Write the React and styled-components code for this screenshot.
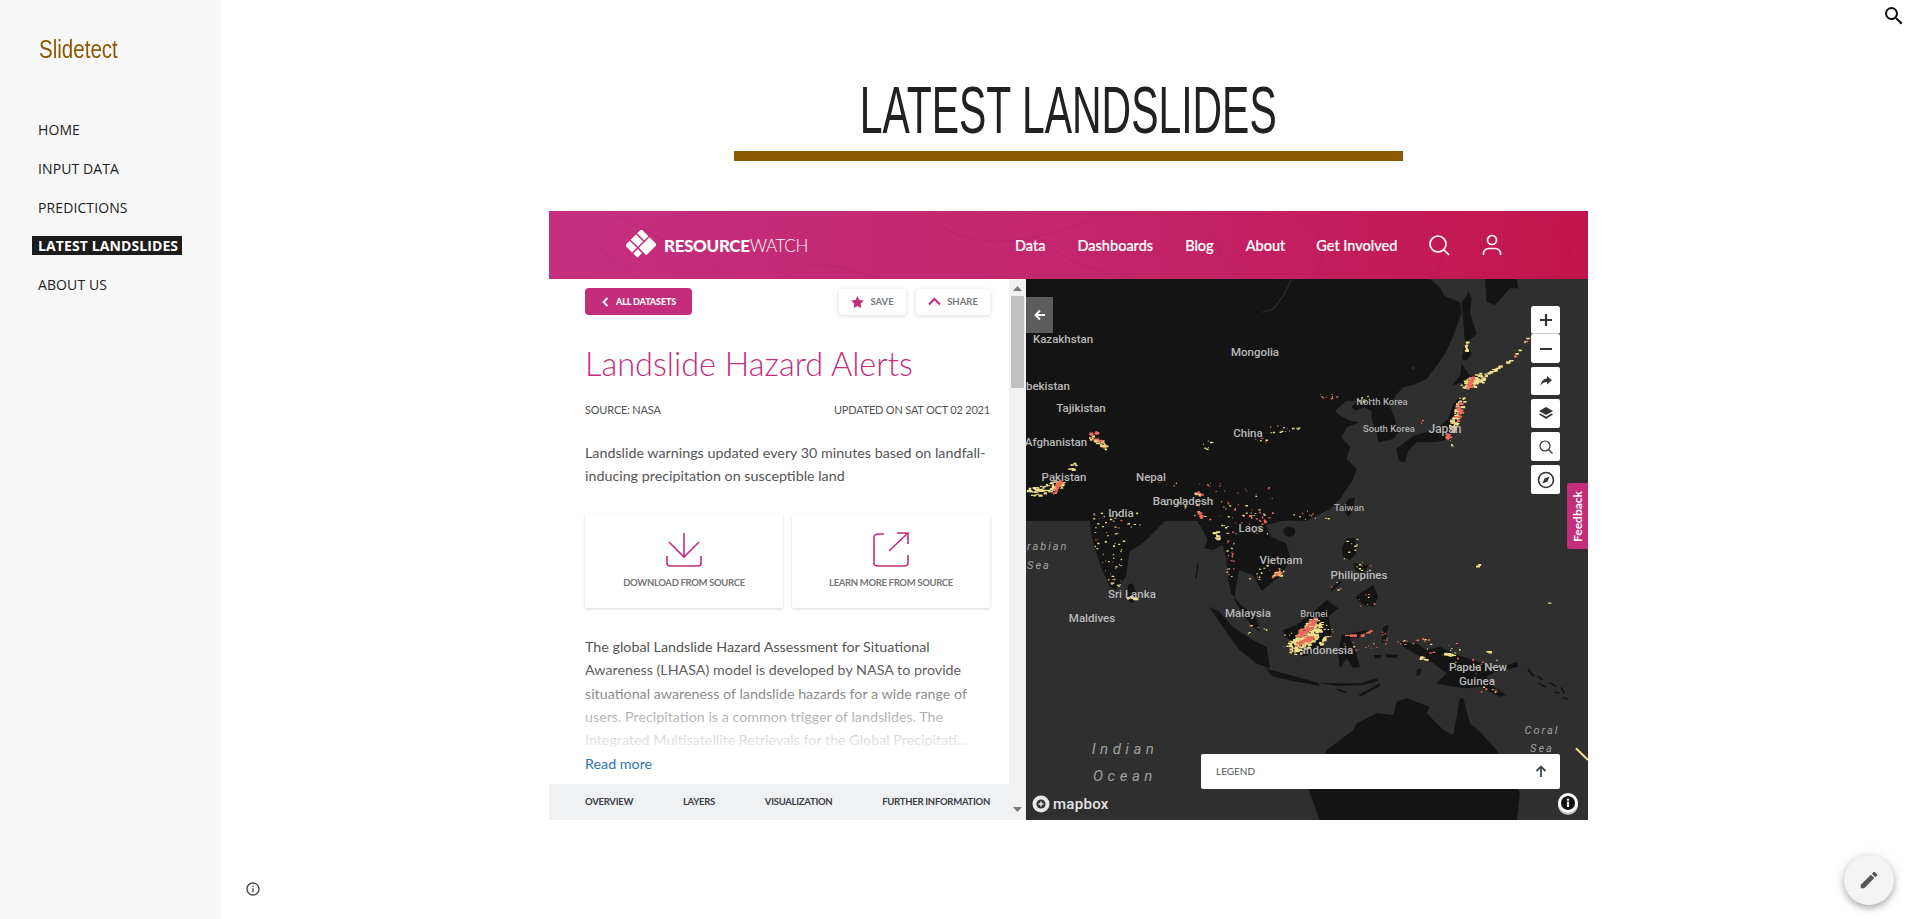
import React from "react";
import styled, { createGlobalStyle } from "styled-components";

const Global = createGlobalStyle`
  html, body { margin: 0; padding: 0; background: #fff; height: 100%; overflow: hidden; }
  * { box-sizing: border-box; }
`;

const Page = styled.div`
  width: 1916px; height: 919px; display: flex; position: relative; overflow: hidden; background: #fff;
`;
const Sidebar = styled.aside`
  width: 221px; flex: none; background: #f7f7f7; padding-top: 34px; display: flex; flex-direction: column;
`;
const Brand = styled.div`
  font-family: "Liberation Sans", sans-serif; font-size: 26px; line-height: 30px; color: #8b5a00;
  margin-left: 39px; transform: scaleX(.79); transform-origin: left center; white-space: nowrap;
`;
const Nav = styled.nav`
  margin-top: 56px; display: flex; flex-direction: column; gap: 19.8px; align-items: flex-start; padding-left: 32px;
`;
const NavItem = styled.a`
  font-family: "Open Sans", sans-serif; font-size: 14px; line-height: 19px; height: 19px; padding: 0 4px 0 6px; letter-spacing: .1px;
  white-space: nowrap; color: ${p => (p.$active ? "#fff" : "#212121")}; font-weight: ${p => (p.$active ? 700 : 400)};
  background: ${p => (p.$active ? "#1c1c1c" : "transparent")};
`;
const Main = styled.main`
  flex: 1; display: flex; flex-direction: column; align-items: center; padding-top: 71px;
`;
const Heading = styled.h1`
  margin: 0; font-family: "Liberation Sans", sans-serif; font-weight: 400; font-size: 66px; line-height: 78px; color: #212121;
  transform: scaleX(.62); white-space: nowrap; text-transform: uppercase;
`;
const Rule = styled.div`
  width: 669px; height: 10px; background: #8b5a00; margin-top: 2px; flex: none;
`;
const Embed = styled.section`
  width: 1039px; height: 609px; margin-top: 50px; display: flex; flex-direction: column; flex: none;
`;
const RWHeader = styled.header`
  height: 68px; flex: none; position: relative; overflow: hidden; display: flex; align-items: center; padding-left: 77px;
  background: linear-gradient(90deg, #c42f80 0%, #c3266c 50%, #c3154c 100%);
`;
const Contours = styled.svg`
  position: absolute; inset: 0; width: 100%; height: 100%; pointer-events: none;
`;
const LogoBox = styled.div`
  display: flex; align-items: center; gap: 8px; position: relative; width: 389px; flex: none;
`;
const LogoWord = styled.span`
  font-family: "Lato", sans-serif; font-size: 17px; color: #fff; font-weight: 300; letter-spacing: -.35px; white-space: nowrap;
  b { font-weight: 900; }
`;
const TopLink = styled.a`
  position: relative; font-family: "Lato", sans-serif; font-size: 14.5px; font-weight: 500; color: #fff; white-space: nowrap;
  margin-right: ${p => p.$gap}px; -webkit-text-stroke: .2px #fff;
`;
const TopIcon = styled.svg`
  position: relative; width: 24px; height: 24px; margin-right: ${p => p.$gap || 0}px; flex: none;
  fill: none; stroke: #fff; stroke-width: 1.7;
`;
const Body = styled.div`
  flex: 1; min-height: 0; display: flex;
`;
const Panel = styled.div`
  width: 460px; flex: none; position: relative; display: flex; flex-direction: column; background: #fff;
`;
const PanelInner = styled.div`
  flex: 1; padding: 9px 19px 0 36px; position: relative; min-height: 0; overflow: hidden;
`;
const Actions = styled.div`
  display: flex; align-items: center; justify-content: space-between; height: 27px;
`;
const BackBtn = styled.div`
  width: 107px; height: 27px; border-radius: 4px; background: #c32d7b; color: #fff; display: flex; align-items: center;
  padding-left: 17px; gap: 7px; font-family: "Lato", sans-serif; font-weight: 900; font-size: 9px; letter-spacing: -.12px; white-space: nowrap;
`;
const ActionGroup = styled.div`
  display: flex; gap: 10px;
`;
const Chip = styled.div`
  height: 26px; width: ${p => p.$w}px; background: #fff; border-radius: 3px; box-shadow: 0 1px 4px rgba(0,0,0,.16);
  display: flex; align-items: center; justify-content: center; gap: 6px; font-family: "Lato", sans-serif; font-size: 9.5px; font-weight: 700; color: #777;
`;
const Title = styled.h2`
  margin: 26px 0 0; font-family: "Lato", sans-serif; font-weight: 300; font-size: 32.5px; line-height: 46px; color: #c32d7b; white-space: nowrap;
`;
const Meta = styled.div`
  margin-top: 16px; display: flex; justify-content: space-between; font-family: "Lato", sans-serif; font-size: 11px; line-height: 14px; color: #555; letter-spacing: -.2px;
`;
const Lead = styled.p`
  margin: 24px 0 0; font-family: "Lato", sans-serif; font-size: 14.3px; line-height: 23px; color: #555; white-space: nowrap;
`;
const Cards = styled.div`
  display: grid; grid-template-columns: 198px 198px; gap: 9px; margin-top: 27px;
`;
const Card = styled.div`
  height: 94px; background: #fff; border-radius: 2px; box-shadow: 0 1px 3px rgba(0,0,0,.17); display: flex; flex-direction: column; align-items: center; padding-top: 18px;
`;
const CardLabel = styled.span`
  margin-top: 8px; font-family: "Lato", sans-serif; font-size: 9.5px; font-weight: 700; color: #777; letter-spacing: -.34px; line-height: 14px; white-space: nowrap;
`;
const Long = styled.div`
  position: relative; margin-top: 27px;
`;
const LongText = styled.p`
  margin: 0; font-family: "Lato", sans-serif; font-size: 14.3px; line-height: 23.3px; color: #555; height: 116.5px; overflow: hidden;
`;
const Clip = styled.span`
  display: block; white-space: nowrap;
`;
const Fade = styled.div`
  position: absolute; left: 0; right: 0; top: 30px; height: 87px; pointer-events: none;
  background: linear-gradient(180deg, rgba(255,255,255,0), rgba(255,255,255,.93));
`;
const ReadMore = styled.a`
  display: block; margin-top: 2px; font-family: "Lato", sans-serif; font-size: 14.3px; line-height: 20px; color: #2c75b0;
`;
const Tabs = styled.div`
  height: 36px; flex: none; background: #f0f1f2; display: flex; align-items: center; justify-content: space-between; padding: 0 19px 2px 36px;
  font-family: "Lato", sans-serif; font-size: 9.5px; font-weight: 700; color: #3b4046; letter-spacing: -.27px;
`;
const Scrollbar = styled.div`
  width: 17px; flex: none; background: #f1f1f1; position: relative; display: flex; flex-direction: column; align-items: center;
`;
const ScrollBtn = styled.svg`
  width: 9px; height: 5px; fill: #7a7a7a; position: absolute; left: 4px; ${p => (p.$down ? "bottom: 8px;" : "top: 7px;")}
`;
const Thumb = styled.div`
  width: 13px; height: 92px; margin-top: 17px; background: #c1c1c1;
`;
const MapPanel = styled.div`
  flex: 1; position: relative; overflow: hidden; background: #2f2f2f;
`;
const MapSvg = styled.svg`
  display: block; width: 562px; height: 541px;
`;
const Land = styled.path`
  fill: #141414;
`;
const Label = styled.text`
  font-family: "Roboto", sans-serif; font-size: ${p => p.$s || 11.5}px; font-weight: 500; fill: ${p => p.$c || "#b9b9b9"};
  text-anchor: ${p => p.$a || "middle"}; dominant-baseline: central;
`;
const SeaLabel = styled.text`
  font-family: "Roboto", sans-serif; font-style: italic; font-size: ${p => p.$s || 11}px; fill: #a0a0a0;
  letter-spacing: ${p => p.$ls || 2}px; text-anchor: ${p => p.$a || "middle"}; dominant-baseline: central;
`;
const MapboxWord = styled.text`
  font-family: "Roboto", sans-serif; font-size: 15px; font-weight: 500; fill: #e4e4e4; letter-spacing: .3px; dominant-baseline: central;
`;
const Collapse = styled.div`
  position: absolute; left: 0; top: 18px; width: 27px; height: 36px; background: #5c5c5c; display: flex; align-items: center; justify-content: center;
`;
const Controls = styled.div`
  position: absolute; top: 27px; right: 28px; width: 29px; display: flex; flex-direction: column; gap: 4px;
`;
const Ctl = styled.div`
  width: 29px; height: ${p => p.$h || 29}px; background: #fff; border-radius: 2px; display: flex; align-items: center; justify-content: center;
  ${p => p.$split && "border-bottom: 1px solid #ccc;"}
`;
const ZoomGroup = styled.div`
  display: flex; flex-direction: column; border-radius: 2px; overflow: hidden;
`;
const Feedback = styled.div`
  position: absolute; right: 0; top: 204px; width: 21px; height: 66px; background: #c32d7b; border-radius: 3px 0 0 3px;
  display: flex; align-items: center; justify-content: center;
  span { transform: rotate(-90deg); color: #fff; font-family: "Lato", sans-serif; font-size: 12px; font-weight: 700; }
`;
const Legend = styled.div`
  position: absolute; left: 175px; top: 475px; width: 359px; height: 35px; background: #fff; border-radius: 2px; display: flex; align-items: center; justify-content: space-between;
  padding: 0 13px 2px 15px; font-family: "Lato", sans-serif; font-size: 10px; color: #555;
`;
const SearchFloat = styled.svg`
  position: absolute; top: 4px; right: 10px; width: 24px; height: 24px; fill: #111;
`;
const InfoFloat = styled.svg`
  position: absolute; left: 245px; top: 881px; width: 16px; height: 16px; fill: #444;
`;
const Fab = styled.div`
  position: absolute; left: 1844px; top: 855px; width: 50px; height: 50px; border-radius: 50%; background: #f3f3f3;
  box-shadow: 0 3px 6px rgba(0,0,0,.28), 0 1px 14px rgba(0,0,0,.1); display: flex; align-items: center; justify-content: center;
  svg { width: 22px; height: 22px; fill: #555; }
`;

// Map data is stated in the coordinates of three reference crops (1/3 scale groups).
const YEL = "#efe08a";
const RED = "#ee6a5c";
const mkRand = seed => () => { seed = (seed * 16807) % 2147483647; return (seed - 1) / 2147483646; };
const scatter = (seed, regions) => {
  const r = mkRand(seed); const out = [];
  regions.forEach(([x, y, w, h, n, red]) => {
    for (let i = 0; i < n; i++) {
      out.push({ x: x + r() * w, y: y + r() * h, w: 2 + r() * 6, h: 2 + r() * 3, c: r() < red ? RED : YEL });
    }
  });
  return out;
};
const band = (seed, items) => {
  const r = mkRand(seed); const out = [];
  items.forEach(([x1, y1, x2, y2, spread, n, red]) => {
    for (let i = 0; i < n; i++) {
      const t = r();
      out.push({
        x: x1 + (x2 - x1) * t + (r() - .5) * 2 * spread, y: y1 + (y2 - y1) * t + (r() - .5) * 2 * spread,
        w: 4 + r() * 9, h: 3 + r() * 4, c: r() < red ? RED : YEL,
      });
    }
  });
  return out;
};
const dotsA = [
  ...scatter(77, [
    [240, 343, 60, 14, 10, .2], [155, 442, 25, 8, 6, .05], [90, 438, 60, 28, 10, .1], [352, 350, 40, 20, 8, .1],
    [40, 470, 40, 20, 4, .5], [540, 420, 10, 10, 2, 1], [630, 480, 10, 40, 3, .4], [30, 690, 60, 30, 8, .6], [160, 700, 110, 20, 6, .2],
  ]),
  ...band(31, [
    [672, 318, 725, 292, 12, 60, 0], [682, 326, 692, 295, 5, 26, 1], [730, 288, 815, 240, 2.5, 26, 0], [815, 240, 872, 160, 1.5, 6, .4],
    [662, 358, 632, 450, 10, 70, .12], [655, 368, 655, 408, 6, 26, 1], [615, 462, 622, 478, 5, 8, 1], [677, 188, 677, 218, 2.5, 9, 0],
  ]),
];
const dotsB = [
  ...scatter(991, [
    [200, 240, 140, 70, 28, .1], [205, 300, 100, 70, 14, .1], [225, 370, 60, 100, 26, .25], [390, 200, 110, 40, 10, .2],
    [390, 155, 200, 12, 10, .7], [500, 170, 240, 110, 44, .55], [560, 270, 170, 40, 20, .5], [600, 330, 30, 60, 10, .5],
    [600, 380, 25, 80, 12, .4], [640, 400, 120, 50, 14, .2], [800, 240, 70, 15, 5, .3], [530, 30, 40, 30, 7, 0], [690, 25, 30, 10, 3, .5],
  ]),
  ...band(53, [
    [10, 187, 105, 158, 14, 70, .06], [82, 188, 100, 150, 5, 26, 1], [130, 118, 150, 92, 6, 12, 0],
    [192, 16, 238, 50, 8, 36, .35], [190, 10, 212, 5, 3, 7, 1], [307, 500, 330, 505, 6, 12, 0],
    [505, 190, 528, 192, 3, 7, .3], [508, 235, 525, 262, 4, 12, 1], [565, 308, 572, 325, 5, 10, 0],
    [748, 428, 760, 432, 5, 10, .3], [708, 258, 716, 275, 3, 6, 1], [655, 255, 680, 258, 2, 3, 1],
  ]),
];
const dotsC = [
  ...scatter(4242, [
    [310, 85, 40, 60, 8, .2], [340, 150, 50, 30, 8, .2], [345, 250, 60, 40, 8, .4], [270, 215, 30, 25, 4, .4],
    [300, 395, 110, 25, 12, .4], [425, 350, 20, 50, 8, .5], [465, 385, 100, 20, 12, .5],
    [560, 395, 100, 40, 12, .2], [640, 440, 130, 50, 12, .5], [720, 500, 70, 45, 8, .5], [125, 360, 30, 50, 6, .1],
    [250, 340, 30, 50, 7, .2], [20, 340, 60, 30, 7, .2], [20, 150, 110, 70, 10, .2],
  ]),
  ...band(97, [
    [160, 412, 230, 345, 22, 260, 0], [172, 378, 225, 328, 8, 70, 1], [170, 400, 215, 380, 6, 40, 1], [240, 400, 260, 375, 4, 12, 0],
    [310, 374, 345, 374, 1.5, 10, 1], [360, 376, 388, 362, 2, 8, 1], [612, 432, 634, 435, 5, 14, 0], [538, 442, 552, 444, 4, 8, 0],
    [102, 188, 118, 190, 5, 12, .3], [735, 423, 748, 424, 1, 3, 0], [706, 170, 720, 155, 1, 3, 0], [923, 278, 925, 280, 1, 1, 0],
  ]),
];
const Dots = ({ items }) => items.map((d, i) => (
  <rect key={i} x={d.x} y={d.y} width={d.w} height={d.h} rx="1" fill={d.c} />
));

const WorldMap = () => (
  <MapSvg viewBox="0 0 562 541">
    <defs>
      <filter id="soft" x="-5%" y="-5%" width="110%" height="110%"><feGaussianBlur stdDeviation="1.2" /></filter>
    </defs>
    <g transform="translate(214 0) scale(.3333)">
      <Land d="M570 0L600 25L612 50L660 70L665 100L655 130L640 170L620 215L590 260L560 300L520 318L490 325L470 345L450 380L465 420L475 460L460 480L415 490L410 460L395 420L395 397L375 385L345 395L335 385L350 365L320 365L285 395L300 410L330 425L358 430L320 445L305 475L330 505L320 540L350 570L340 600L320 630L300 660L270 690L200 725L-700 725L-700 0Z" />
      <Land d="M735 0L740 68L765 78L810 28L835 28L830 0Z" />
      <Land d="M685 35L695 60L690 100L710 165L680 190L695 225L680 245L665 240L675 190L670 130L665 70L680 50Z" />
      <Land d="M665 255L690 290L730 290L700 320L690 335L665 310L635 320L660 290Z" />
      <Land d="M660 355L670 385L650 430L625 480L590 490L530 490L505 515L495 550L478 545L468 510L520 470L590 450L625 420L640 375Z" />
      <Land d="M325 660L345 655L340 690L325 715L310 690Z" />
      <path d="M155 0L130 50L100 90L65 100" fill="none" stroke="#2a2a2a" strokeWidth="4" />
      <path d="M515 262h8v10h-8z" fill="#2a2a2a" />
    </g>
    <g transform="translate(0 151) scale(.3333)">
      <Land d="M-10 0L-10 195L60 190L100 190L130 215L135 240L165 270L190 265L195 310L205 350L225 410L250 470L270 480L300 440L310 365L350 340L390 300L420 270L460 260L500 250L530 300L545 330L535 355L560 360L590 345L600 380L605 440L615 490L645 525L690 560L702 605L680 590L650 550L625 510L630 470L640 420L680 435L708 482L760 440L795 390L780 340L735 320L720 285L780 270L810 265L870 240L905 215L905 0Z" />
      <Land d="M305 465L320 460L335 500L320 520L305 510Z" />
      <Land d="M550 530L580 545L620 590L680 630L722 650L732 716L690 700L640 660L590 590Z" />
      <ellipse cx="790" cy="305" rx="18" ry="15" fill="#141414" />
      <path d="M516 400L510 445" stroke="#141414" strokeWidth="4" />
    </g>
    <g transform="translate(214 231) scale(.3333)">
      <Land d="M320 85L345 85L350 130L330 150L310 140L305 115Z" />
      <Land d="M340 160L385 165L370 190L345 180Z" />
      <Land d="M345 260L400 225L415 260L400 290L370 285Z" />
      <Land d="M270 240L300 213L304 218L276 243Z" />
      <Land d="M130 360L170 345L215 310L260 270L295 295L265 320L275 370L255 390L250 420L190 440L150 420L150 390L130 375Z" />
      <Land d="M305 375L385 360L365 380L330 385L345 420L360 470L340 475L320 445L300 475L295 440L300 400Z" />
      <Land d="M430 350L445 345L440 390L425 400Z" />
      <Land d="M435 432L475 435L470 445L440 442Z" />
      <Land d="M400 435L425 435L420 445L405 445Z" />
      <Land d="M480 395L530 400L560 420L600 410L650 435L700 450L760 470L790 470L740 500L760 530L800 555L780 560L720 530L680 535L640 530L590 520L620 490L580 460L540 440L490 410Z" />
      <Land d="M790 470L830 455L835 470L805 478Z" />
      <Land d="M75 475L130 490L235 518L240 528L170 515L100 500Z" />
      <Land d="M240 518L290 520L360 520L410 505L415 512L370 525L290 528Z" />
      <Land d="M355 555L420 520L420 528L365 558Z" />
      <Land d="M290 535L320 545L315 550L292 541Z" />
      <Land d="M530 480L545 475L540 495L530 497Z" />
      <g fill="#141414">
        <path d="M865 475L885 498L878 500L862 480Z" /><path d="M895 497L910 507L905 510L892 500Z" />
        <path d="M895 517L920 530L915 533L893 520Z" /><path d="M930 515L950 528L945 531L927 518Z" />
        <path d="M945 543L960 548L955 552L942 547Z" /><path d="M965 530L975 548L970 550L962 534Z" />
        <path d="M970 560L985 566L980 569L968 563Z" />
      </g>
      <Land d="M205 835L260 720L340 660L350 640L410 610L460 615L470 575L500 565L570 590L560 610L610 660L640 675L660 565L670 565L690 640L720 665L770 720L840 850L830 935L240 935Z" />
      <path d="M1008 715L1044 750" stroke={YEL} strokeWidth="6" filter="url(#soft)" />
    </g>
    <g transform="translate(214 0) scale(.3333)" filter="url(#soft)"><Dots items={dotsA} /></g>
    <g transform="translate(0 151) scale(.3333)" filter="url(#soft)"><Dots items={dotsB} /></g>
    <g transform="translate(214 231) scale(.3333)" filter="url(#soft)"><Dots items={dotsC} /></g>

    <Label x="37" y="60">Kazakhstan</Label>
    <Label x="229" y="73">Mongolia</Label>
    <Label x="0" y="107" $a="start">bekistan</Label>
    <Label x="55" y="129">Tajikistan</Label>
    <Label x="30" y="163">Afghanistan</Label>
    <Label x="38" y="198">Pakistan</Label>
    <Label x="125" y="198">Nepal</Label>
    <Label x="222" y="154">China</Label>
    <Label x="157" y="222">Bangladesh</Label>
    <Label x="95" y="234">India</Label>
    <Label x="225" y="249">Laos</Label>
    <Label x="255" y="281">Vietnam</Label>
    <Label x="106" y="315">Sri Lanka</Label>
    <Label x="66" y="339">Maldives</Label>
    <Label x="222" y="334">Malaysia</Label>
    <Label x="288" y="334" $s="9.5" $c="#aaa">Brunei</Label>
    <Label x="302" y="371">Indonesia</Label>
    <Label x="333" y="296">Philippines</Label>
    <Label x="452" y="388">Papua New</Label>
    <Label x="451" y="402">Guinea</Label>
    <Label x="356" y="122" $s="9.5" $c="#b0b0b0">North Korea</Label>
    <Label x="363" y="149" $s="9.5" $c="#b0b0b0">South Korea</Label>
    <Label x="419" y="150" $s="12">Japan</Label>
    <Label x="323" y="228" $s="9.5" $c="#aaa">Taiwan</Label>
    <SeaLabel x="1" y="267" $a="start">rabian</SeaLabel>
    <SeaLabel x="13" y="286">Sea</SeaLabel>
    <SeaLabel x="516" y="451">Coral</SeaLabel>
    <SeaLabel x="516" y="469">Sea</SeaLabel>
    <SeaLabel x="99" y="470" $s="15" $ls="4.5">Indian</SeaLabel>
    <SeaLabel x="99" y="497" $s="15" $ls="4.5">Ocean</SeaLabel>

    <g transform="translate(7 516)">
      <circle cx="8" cy="9" r="8.5" fill="#e8e8e8" />
      <circle cx="8" cy="9" r="4.6" fill="#333" />
      <path d="M8 6.500v5M5.500 9h5" stroke="#e8e8e8" strokeWidth="1.400" />
    </g>
    <MapboxWord x="27" y="525">mapbox</MapboxWord>
    <g transform="translate(542 524)">
      <circle cx="0" cy="2" r="10" fill="#bdbdbd" />
      <circle cx="0" cy="0" r="10" fill="#fff" />
      <circle cx="0" cy="0" r="7" fill="#111" />
      <path d="M-1.100 -1.200h2.200v5.200h-2.200zM-1.100 -4.200h2.200v2h-2.200z" fill="#fff" />
    </g>
  </MapSvg>
);

const Logo = () => (
  <svg width="30" height="30" viewBox="0 0 30 30" style={{ flex: "none" }}>
    <g fill="#fff" transform="rotate(45 15 15)">
      <rect x="4" y="3.500" width="10" height="6" />
      <rect x="15.500" y="3.500" width="10.500" height="15" />
      <rect x="4" y="11" width="10" height="7.500" />
      <rect x="4" y="20" width="10" height="6.500" />
      <rect x="15.500" y="20" width="6" height="6.500" />
    </g>
  </svg>
);

const App = () => (
  <Page>
    <Global />
    <Sidebar>
      <Brand>Slidetect</Brand>
      <Nav>
        <NavItem>HOME</NavItem>
        <NavItem>INPUT DATA</NavItem>
        <NavItem>PREDICTIONS</NavItem>
        <NavItem $active>LATEST LANDSLIDES</NavItem>
        <NavItem>ABOUT US</NavItem>
      </Nav>
    </Sidebar>
    <Main>
      <Heading>Latest Landslides</Heading>
      <Rule />
      <Embed>
        <RWHeader>
          <Contours viewBox="0 0 1039 68" preserveAspectRatio="none" fill="none" stroke="rgba(90,0,50,.09)">
            <path d="M30 20L90 70M60 0C100 20 150 50 190 70M230 70C260 40 300 60 340 70M380 0C400 40 480 40 560 0M470 0C500 50 540 60 600 70" />
            <path d="M640 0C680 30 660 50 700 70M740 0C780 20 780 50 760 70M860 0C900 30 900 50 880 70M980 0C1030 30 1030 50 1000 70" />
          </Contours>
          <LogoBox>
            <Logo />
            <LogoWord><b>RESOURCE</b>WATCH</LogoWord>
          </LogoBox>
          <TopLink $gap={32}>Data</TopLink>
          <TopLink $gap={32}>Dashboards</TopLink>
          <TopLink $gap={32}>Blog</TopLink>
          <TopLink $gap={31}>About</TopLink>
          <TopLink $gap={30}>Get Involved</TopLink>
          <TopIcon $gap={29} viewBox="0 0 24 24"><circle cx="11" cy="11" r="8" /><path d="M17 17l5 5" /></TopIcon>
          <TopIcon viewBox="0 0 24 24"><circle cx="12" cy="7" r="4.500" /><path d="M3.500 22v-1.500c0-3 2.500-5 5-5h7c2.500 0 5 2 5 5V22" /></TopIcon>
        </RWHeader>
        <Body>
          <Panel>
            <PanelInner>
              <Actions>
                <BackBtn>
                  <svg width="7" height="10" viewBox="0 0 7 10" fill="none" stroke="#fff" strokeWidth="1.800"><path d="M5.500 1L1.500 5l4 4" /></svg>
                  ALL DATASETS
                </BackBtn>
                <ActionGroup>
                  <Chip $w={67}>
                    <svg width="13" height="12" viewBox="0 0 24 23" fill="#c32d7b"><path d="M12 0l3.700 7.600 8.300 1.200-6 5.900 1.400 8.300L12 19l-7.400 4L6 14.700 0 8.800l8.300-1.200z" /></svg>
                    SAVE
                  </Chip>
                  <Chip $w={74}>
                    <svg width="13" height="9" viewBox="0 0 13 9" fill="none" stroke="#c32d7b" strokeWidth="2"><path d="M1 7.500l5.500-5.500L12 7.500" /></svg>
                    SHARE
                  </Chip>
                </ActionGroup>
              </Actions>
              <Title>Landslide Hazard Alerts</Title>
              <Meta><span>SOURCE: NASA</span><span>UPDATED ON SAT OCT 02 2021</span></Meta>
              <Lead>Landslide warnings updated every 30 minutes based on landfall-<br />inducing precipitation on susceptible land</Lead>
              <Cards>
                <Card>
                  <svg width="36" height="36" viewBox="0 0 36 36" fill="none" stroke="#c32d7b" strokeWidth="1.600"><path d="M18 1v24M3 10l15 15 15-15M1 24v7c0 2 1 3 3 3h28c2 0 3-1 3-3v-7" /></svg>
                  <CardLabel>DOWNLOAD FROM SOURCE</CardLabel>
                </Card>
                <Card>
                  <svg width="36" height="36" viewBox="0 0 36 36" fill="none" stroke="#c32d7b" strokeWidth="1.600"><path d="M11 2H5C2.500 2 1 3.500 1 6v25c0 2 1.500 3 4 3h26c2 0 4-1 4-3v-8M16 19L35 1M24 1h11v11" /></svg>
                  <CardLabel>LEARN MORE FROM SOURCE</CardLabel>
                </Card>
              </Cards>
              <Long>
                <LongText>
                  <Clip>The global Landslide Hazard Assessment for Situational</Clip>
                  <Clip>Awareness (LHASA) model is developed by NASA to provide</Clip>
                  <Clip>situational awareness of landslide hazards for a wide range of</Clip>
                  <Clip>users. Precipitation is a common trigger of landslides. The</Clip>
                  <Clip>Integrated Multisatellite Retrievals for the Global Precipitati...</Clip>
                </LongText>
                <Fade />
              </Long>
              <ReadMore>Read more</ReadMore>
            </PanelInner>
            <Tabs>
              <span>OVERVIEW</span><span>LAYERS</span><span>VISUALIZATION</span><span>FURTHER INFORMATION</span>
            </Tabs>
          </Panel>
          <Scrollbar>
            <ScrollBtn viewBox="0 0 9 5"><path d="M4.500 0L9 5H0z" /></ScrollBtn>
            <Thumb />
            <ScrollBtn $down viewBox="0 0 9 5"><path d="M0 0h9L4.500 5z" /></ScrollBtn>
          </Scrollbar>
          <MapPanel>
            <WorldMap />
            <Collapse>
              <svg width="12" height="12" viewBox="0 0 12 12" fill="none" stroke="#fff" strokeWidth="1.800"><path d="M11 6H2M6 1.500L1.500 6 6 10.500" /></svg>
            </Collapse>
            <Controls>
              <ZoomGroup>
                <Ctl $split $h={28}>
                  <svg width="14" height="14" viewBox="0 0 14 14" stroke="#333" strokeWidth="2.200"><path d="M7 1v12M1 7h12" /></svg>
                </Ctl>
                <Ctl $h={29}>
                  <svg width="14" height="14" viewBox="0 0 14 14" stroke="#333" strokeWidth="2.200"><path d="M1 7h12" /></svg>
                </Ctl>
              </ZoomGroup>
              <Ctl $h={28}>
                <svg width="12" height="10" viewBox="0 0 12 10" fill="#333"><path d="M7 0l5 4.200-5 4.300V6C4 6 2 7 .500 10 1 6 3 3 7 2.500z" /></svg>
              </Ctl>
              <Ctl>
                <svg width="14" height="13" viewBox="0 0 14 13" fill="#333"><path d="M7 0l7 4-7 4-7-4z" /><path d="M1.500 6.500L7 9.700l5.500-3.200L14 7.500 7 12 0 7.500z" /></svg>
              </Ctl>
              <Ctl>
                <svg width="14" height="14" viewBox="0 0 14 14" fill="none" stroke="#333" strokeWidth="1.200"><circle cx="6" cy="6" r="5" /><path d="M9.500 9.500L13.500 13.500" /></svg>
              </Ctl>
              <Ctl>
                <svg width="18" height="18" viewBox="0 0 18 18" fill="none" stroke="#333" strokeWidth="1.600"><circle cx="9" cy="9" r="7.500" /><path d="M12.500 5.500L10.500 10.500 5.500 12.500 7.500 7.500z" fill="#333" stroke="none" /></svg>
              </Ctl>
            </Controls>
            <Feedback><span>Feedback</span></Feedback>
            <Legend>
              <span>LEGEND</span>
              <svg width="12" height="12" viewBox="0 0 12 12" fill="none" stroke="#3b4650" strokeWidth="1.800"><path d="M6 12V2M1.500 6L6 1.500 10.500 6" /></svg>
            </Legend>
          </MapPanel>
        </Body>
      </Embed>
    </Main>
    <SearchFloat viewBox="0 0 24 24"><path d="M15.500 14h-.79l-.28-.27A6.470 6.470 0 0 0 16 9.500 6.500 6.500 0 1 0 9.500 16c1.610 0 3.090-.59 4.230-1.570l.27.28v.79l5 4.990L20.490 19l-4.990-5zm-6 0C7.010 14 5 11.990 5 9.500S7.010 5 9.500 5 14 7.010 14 9.500 11.990 14 9.500 14z" /></SearchFloat>
    <InfoFloat viewBox="0 0 24 24"><path d="M11 7h2v2h-2zm0 4h2v6h-2zm1-9C6.480 2 2 6.480 2 12s4.480 10 10 10 10-4.480 10-10S17.520 2 12 2zm0 18c-4.410 0-8-3.590-8-8s3.590-8 8-8 8 3.590 8 8-3.590 8-8 8z" /></InfoFloat>
    <Fab>
      <svg viewBox="0 0 24 24"><path d="M3 17.250V21h3.750L17.810 9.940l-3.750-3.750L3 17.250zM20.710 7.040a1 1 0 0 0 0-1.410l-2.340-2.340a1 1 0 0 0-1.410 0l-1.830 1.830 3.750 3.750 1.830-1.830z" /></svg>
    </Fab>
  </Page>
);

export default App;
